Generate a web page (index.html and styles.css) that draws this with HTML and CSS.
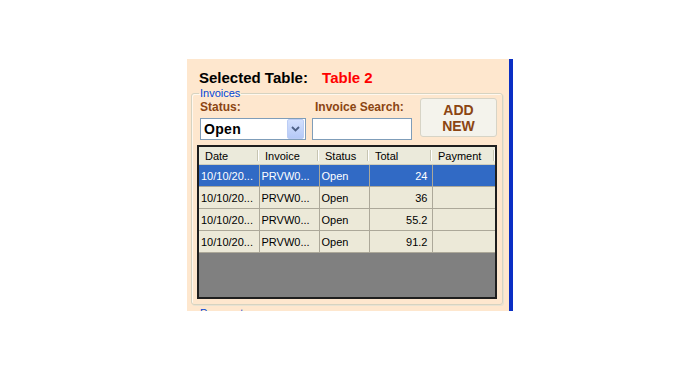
FILE: index.html
```html
<!DOCTYPE html>
<html lang="en">
<head>
    <meta charset="UTF-8">
    <meta name="viewport" content="width=device-width, initial-scale=1.0">
    <title>Table Invoices</title>
    <link rel="stylesheet" href="styles.css">
</head>
<body>
    <div class="page">
        <div class="panel">
            <!-- Selected table heading -->
            <div class="selected">
                <span class="selected-label">Selected Table:</span>
                <span class="selected-name">Table 2</span>
            </div>

            <!-- Invoices group -->
            <fieldset class="group">
                <legend>Invoices</legend>
                <div class="controls">
                    <div class="field field-status">
                        <label>Status:</label>
                        <div class="combo">
                            <span class="combo-value">Open</span>
                            <span class="combo-btn">
                                <svg width="9" height="6" viewBox="0 0 9 6"><path d="M1 1 L4.5 4.5 L8 1" fill="none" stroke="#4d6185" stroke-width="1.8"/></svg>
                            </span>
                        </div>
                    </div>
                    <div class="field field-search">
                        <label>Invoice Search:</label>
                        <input class="search" type="text">
                    </div>
                    <button class="add-btn">ADD<br>NEW</button>
                </div>

                <div class="grid">
                    <table>
                        <colgroup>
                            <col class="col-date">
                            <col class="col-invoice">
                            <col class="col-status">
                            <col class="col-total">
                            <col class="col-payment">
                        </colgroup>
                        <thead>
                            <tr>
                                <th>Date</th>
                                <th>Invoice</th>
                                <th>Status</th>
                                <th>Total</th>
                                <th>Payment</th>
                            </tr>
                        </thead>
                        <tbody>
                            <tr class="selected-row">
                                <td>10/10/20...</td>
                                <td>PRVW0...</td>
                                <td>Open</td>
                                <td class="num">24</td>
                                <td></td>
                            </tr>
                            <tr>
                                <td>10/10/20...</td>
                                <td>PRVW0...</td>
                                <td>Open</td>
                                <td class="num">36</td>
                                <td></td>
                            </tr>
                            <tr>
                                <td>10/10/20...</td>
                                <td>PRVW0...</td>
                                <td>Open</td>
                                <td class="num">55.2</td>
                                <td></td>
                            </tr>
                            <tr>
                                <td>10/10/20...</td>
                                <td>PRVW0...</td>
                                <td>Open</td>
                                <td class="num">91.2</td>
                                <td></td>
                            </tr>
                        </tbody>
                    </table>
                </div>
            </fieldset>

            <!-- Next group, cut off by the panel -->
            <fieldset class="group group-next">
                <legend>Payments</legend>
            </fieldset>
        </div>
    </div>
</body>
</html>
```

FILE: styles.css
```css
body {
    margin: 0;
    background-color: #ffffff;
    font-family: 'Liberation Sans', Arial, sans-serif;
}

.page {
    padding: 59px 0 0 187px;
}

.panel {
    width: 322px;
    height: 252px;
    background-color: #fee7ce;
    border-right: 4px solid #0a2fc4;
    overflow: hidden;
}

.selected {
    padding: 10px 0 0 12px;
    height: 18px;
    line-height: 18px;
    font-size: 15px;
    font-weight: bold;
}

.selected-label {
    color: #000;
}

.selected-name {
    color: #ff0000;
    margin-left: 10px;
}

.group {
    margin: 0 0 0 4px;
    width: 300px;
    padding: 0 5px 5px 5px;
    border: 1px solid #d6d3c1;
    border-radius: 3px;
    box-shadow: inset 1px 1px 0 #fff8ee, 1px 1px 0 #e8e2d2;
}

.group legend {
    padding: 0 1px;
    margin-left: 2px;
    font-size: 11px;
    line-height: 13px;
    color: #0046d5;
}

.controls {
    display: flex;
    align-items: flex-start;
    padding-left: 3px;
    height: 40px;
}

.field {
    display: flex;
    flex-direction: column;
}

.field label {
    font-size: 12px;
    font-weight: bold;
    line-height: 14px;
    color: #8b4513;
    margin-bottom: 4px;
}

.field-status {
    width: 106px;
}

.field-search {
    width: 100px;
    margin-left: 6px;
}

.field-search label {
    padding-left: 3px;
}

.combo {
    display: flex;
    align-items: center;
    height: 20px;
    border: 1px solid #7f9db9;
    background-color: #fff;
}

.combo-value {
    flex: 1;
    padding-left: 3px;
    font-size: 14px;
    font-weight: bold;
    letter-spacing: 0.3px;
    color: #000;
}

.combo-btn {
    display: flex;
    align-items: center;
    justify-content: center;
    width: 15px;
    height: 18px;
    margin-right: 1px;
    border: 1px solid #bccdf5;
    border-radius: 2px;
    background: linear-gradient(#d3e0fd, #b5c9f7);
}

.search {
    box-sizing: border-box;
    width: 100px;
    height: 22px;
    margin: 0;
    border: 1px solid #7f9db9;
    background-color: #fff;
}

.add-btn {
    width: 77px;
    height: 39px;
    margin: -2px 0 0 8px;
    padding: 0;
    border: 1px solid #d7d4c6;
    border-radius: 3px;
    background-color: #f4f3ec;
    font-family: 'Liberation Sans', Arial, sans-serif;
    font-size: 14px;
    font-weight: bold;
    line-height: 16px;
    color: #8b4513;
}

.grid {
    height: 150px;
    margin-top: 5px;
    width: 296px;
    border: 2px solid #1e1e1e;
    background-color: #808080;
}

.grid table {
    border-collapse: collapse;
    table-layout: fixed;
    width: 296px;
    font-size: 11px;
}

.col-date { width: 60px; }
.col-invoice { width: 60px; }
.col-status { width: 50px; }
.col-total { width: 63px; }
.col-payment { width: 63px; }

.grid th {
    height: 17px;
    padding: 0 0 0 6px;
    text-align: left;
    font-weight: normal;
    background-color: #ebeadb;
    border-bottom: 1px solid #d1ceba;
    position: relative;
}

.grid th::after {
    content: "";
    position: absolute;
    right: 0;
    top: 3px;
    bottom: 3px;
    width: 1px;
    background-color: #c7c5b2;
    border-right: 1px solid #ffffff;
}

.grid td {
    height: 21px;
    padding: 0 0 0 2px;
    background-color: #ece9d8;
    border-right: 1px solid #aca899;
    border-bottom: 1px solid #aca899;
    white-space: nowrap;
    overflow: hidden;
}

.grid td:last-child {
    border-right: none;
}

.grid td.num {
    text-align: right;
    padding: 0 4px 0 0;
}

.grid tr.selected-row td {
    background-color: #316ac5;
    color: #ffffff;
}

.group-next {
    margin-top: 2px;
    height: 20px;
}
```
